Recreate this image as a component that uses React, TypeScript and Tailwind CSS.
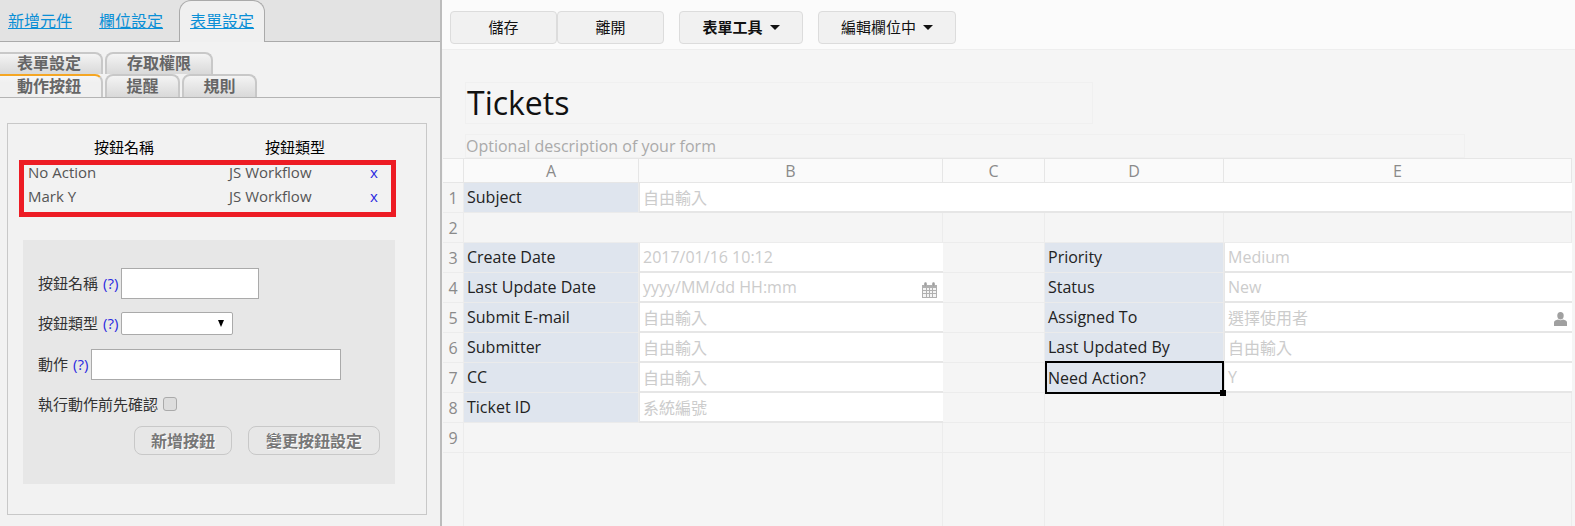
const cjk = "font-['Open_Sans','Noto_Sans_CJK_TC',sans-serif]";

function SubTab({ label, w, active, first }: { label: string; w: string; active?: boolean; first?: boolean }) {
  return (
    <div
      className={`${w} h-full flex items-center justify-center pb-[2px] rounded-t-lg border-2 border-b-0 border-[#c8c8c8] text-[16px] leading-none font-bold text-[#666] bg-gradient-to-b from-[#f4f4f4] to-[#d9d9d9] ${first ? "rounded-tl-none border-l-0 pr-[3px]" : ""} ${active ? "border-t-[#f5a623] from-[#f6f6f6] to-[#f0f0f0] to-30%" : ""}`}
    >
      {label}
    </div>
  );
}

function Help() {
  return <span className="text-[#2a2ae0] text-[15px] ml-[5px] mr-[3px]">(?)</span>;
}

function LeftPanel() {
  return (
    <div className="w-[442px] shrink-0 h-[526px] bg-[#f2f2f2] flex flex-col border-r-2 border-[#bcbcbc] text-[#333]">
      <div className="h-[42px] shrink-0 bg-[#e3e3e3] border-b border-[#aaa] flex items-end text-[16px] text-[#0a8fd6] underline">
        <span className="ml-[8px] mb-[12px] leading-[16px]">新增元件</span>
        <span className="ml-[27px] mb-[12px] leading-[16px]">欄位設定</span>
        <div className="ml-[16px] w-[86px] h-[42px] bg-[#f0f0f0] border border-b-0 border-[#aaa] rounded-t-xl pl-[10px] pt-[12px] leading-[16px] -mb-px">
          表單設定
        </div>
      </div>
      <div className="h-[56px] shrink-0 pt-[10px] flex flex-col border-b border-[#b4b4b4]">
        <div className="h-[22px] flex gap-[2px]">
          <SubTab label="表單設定" w="w-[103px]" first />
          <SubTab label="存取權限" w="w-[108px]" />
        </div>
        <div className="h-[23px] flex gap-[2px]">
          <SubTab label="動作按鈕" w="w-[103px]" first active />
          <SubTab label="提醒" w="w-[75px]" />
          <SubTab label="規則" w="w-[75px]" />
        </div>
      </div>
      <div className="ml-[7px] mt-[25px] w-[420px] h-[392px] border border-[#c8c8c8] pl-[11px] pt-[13px]">
        <div className="flex h-[20px] items-center text-[15px] text-black leading-none">
          <span className="ml-[75px]">按鈕名稱</span>
          <span className="ml-[111px]">按鈕類型</span>
        </div>
        <div className="mt-[3px] w-[377px] h-[57px] border-[5px] border-[#ed1c24] pb-[8px] text-[15px] text-[#555] flex flex-col justify-center">
          {["No Action", "Mark Y"].map((name) => (
            <div key={name} className="h-[24px] shrink-0 flex items-center">
              <span className="w-[205px] pl-[4px]">{name}</span>
              <span className="w-[141px]">JS Workflow</span>
              <span className="text-[#2a2ae0]">x</span>
            </div>
          ))}
        </div>
        <div className="ml-[4px] mt-[23px] w-[372px] h-[244px] bg-[#e7e7e7] pl-[15px] pt-[28px] text-[15px] leading-none">
          <div className="h-[31px] flex items-center">
            <span>按鈕名稱</span>
            <Help />
            <div className="w-[138px] h-[31px] bg-white border border-[#aaa]" />
          </div>
          <div className="mt-[13px] h-[23px] flex items-center">
            <span>按鈕類型</span>
            <Help />
            <div className="w-[112px] h-[23px] bg-white border border-[#aaa] rounded-[2px] flex items-center justify-end pr-[8px]">
              <div className="w-0 h-0 border-x-[3.5px] border-t-[7px] border-x-transparent border-t-black" />
            </div>
          </div>
          <div className="mt-[14px] h-[31px] flex items-center">
            <span>動作</span>
            <Help />
            <div className="w-[250px] h-[31px] bg-white border border-[#aaa]" />
          </div>
          <div className="mt-[16px] h-[16px] flex items-center">
            <span>執行動作前先確認</span>
            <div className="ml-[5px] w-[14px] h-[14px] rounded-[3px] border border-[#aaa] bg-[#ddd]" />
          </div>
          <div className="mt-[14px] flex gap-[16px] pl-[96px]">
            {[
              ["新增按鈕", "w-[98px]"],
              ["變更按鈕設定", "w-[132px]"],
            ].map(([t, w]) => (
              <div
                key={t}
                className={`${w} h-[29px] flex items-center justify-center rounded-lg border border-[#c8c8c8] text-[16px] font-bold text-[#777] [text-shadow:1px_1px_0_#fff]`}
              >
                {t}
              </div>
            ))}
          </div>
        </div>
      </div>
    </div>
  );
}

function ToolButton({ label, w, caret, bold }: { label: string; w: string; caret?: boolean; bold?: boolean }) {
  return (
    <div
      className={`${w} h-[33px] flex items-center justify-center gap-[7px] rounded-[4px] border border-[#dcdcdc] bg-[#f1f1f1] text-[15px] text-[#111] ${bold ? "font-bold" : ""}`}
    >
      {label}
      {caret && <div className="w-0 h-0 border-x-[5px] border-t-[5px] border-x-transparent border-t-[#111]" />}
    </div>
  );
}

function Calendar() {
  return (
    <svg width="15" height="16" viewBox="0 0 15 16" className="absolute right-[6px] top-[9px]" fill="none" stroke="#b0b0b0">
      <rect x="0.5" y="3.5" width="14" height="12" fill="#f4f4f4" />
      <path d="M0 4.5h15M0 5.5h15M0 8.5h15M0 11.5h15M4.5 6v9M7.5 6v9M10.5 6v9" />
      <rect x="2.5" y="0.5" width="2" height="4" rx="1" fill="#a0a0a0" />
      <rect x="10.5" y="0.5" width="2" height="4" rx="1" fill="#a0a0a0" />
    </svg>
  );
}

function User() {
  return (
    <svg width="13" height="14" viewBox="0 0 13 14" className="absolute right-[5px] top-[9px]" fill="#a0a0a0">
      <ellipse cx="6.5" cy="3.7" rx="3.2" ry="3.7" />
      <path d="M0 14V10.5C0 9 2 8 4 7.6C5.5 8.6 7.5 8.6 9 7.6C11 8 13 9 13 10.5V14Z" />
    </svg>
  );
}

const labelCell = "bg-[#dfe5ee] text-[#222] border-b border-r border-[#ebebeb] pl-[3px] pb-[2px] flex items-center text-[16px]";
const valueCell = "relative bg-white text-[#ccc] border-b-2 border-l border-[#e6e6e6] pl-[3px] flex items-center text-[16px]";
const emptyCell = "border-b border-r border-[#ececec]";

// CJK placeholders sit a little lower than the latin ones in the reference
const nudge = (s: string) => (/[^\x00-\x7f]/.test(s) ? "pt-[2px]" : "");

type Row = { a?: string; b?: string; d?: string; e?: string; icon?: "cal" | "user"; selected?: boolean };

const rows: Row[] = [
  { a: "Create Date", b: "2017/01/16 10:12", d: "Priority", e: "Medium" },
  { a: "Last Update Date", b: "yyyy/MM/dd HH:mm", d: "Status", e: "New", icon: "cal" },
  { a: "Submit E-mail", b: "自由輸入", d: "Assigned To", e: "選擇使用者", icon: "user" },
  { a: "Submitter", b: "自由輸入", d: "Last Updated By", e: "自由輸入" },
  { a: "CC", b: "自由輸入", d: "Need Action?", e: "Y", selected: true },
  { a: "Ticket ID", b: "系統編號" },
];

function RowNum({ n }: { n: number }) {
  return <div className="border-b border-r border-[#ececec] flex items-center justify-center text-[16px] text-[#8a8a8a]">{n}</div>;
}

function Sheet() {
  return (
    <div className="flex-1 min-h-0 ml-px grid grid-cols-[21px_175px_304px_102px_179px_348px] grid-rows-[25px_repeat(9,30px)_1fr]">
      {["", "A", "B", "C", "D", "E"].map((c, i) => (
        <div key={i} className="bg-[#fafafa] border-t border-b border-r border-[#e6e6e6] flex items-center justify-center text-[16px] text-[#8a8a8a]">
          {c}
        </div>
      ))}

      <RowNum n={1} />
      <div className={labelCell}>Subject</div>
      <div className={`${valueCell} col-span-4 ${nudge("自由輸入")}`}>自由輸入</div>

      <RowNum n={2} />
      <div className={`${emptyCell} col-span-2`} />
      <div className={emptyCell} />
      <div className={emptyCell} />
      <div className={emptyCell} />

      {rows.map((r, i) => (
        <div key={i} className="contents">
          <RowNum n={i + 3} />
          <div className={labelCell}>{r.a}</div>
          <div className={`${valueCell} ${nudge(r.b ?? "")}`}>
            {r.b}
            {r.icon === "cal" && <Calendar />}
          </div>
          <div className={emptyCell} />
          {r.d ? (
            <div className={r.selected ? "relative z-10 -mt-[2px] -mb-px bg-[#dfe5ee] text-[#222] border-2 border-black pl-[1px] flex items-center text-[16px]" : labelCell}>
              {r.d}
              {r.selected && <div className="absolute -right-[4px] -bottom-[4px] w-[6px] h-[6px] bg-black" />}
            </div>
          ) : (
            <div className={emptyCell} />
          )}
          {r.e ? (
            <div className={`${valueCell} ${nudge(r.e)}`}>
              {r.e}
              {r.icon === "user" && <User />}
            </div>
          ) : (
            <div className={emptyCell} />
          )}
        </div>
      ))}

      <RowNum n={9} />
      <div className={`${emptyCell} col-span-2`} />
      <div className={emptyCell} />
      <div className={emptyCell} />
      <div className={emptyCell} />

      <div className="border-r border-[#ececec]" />
      <div className="col-span-2 border-r border-[#ececec]" />
      <div className="border-r border-[#ececec]" />
      <div className="border-r border-[#ececec]" />
      <div className="border-r border-[#ececec]" />
    </div>
  );
}

function RightPanel() {
  return (
    <div className="flex-1 min-w-0 h-[526px] flex flex-col bg-[#f5f5f5]">
      <div className="h-[50px] shrink-0 bg-[#fbfbfb] border-b border-[#eee] flex items-start pt-[11px] pl-[8px]">
        <ToolButton label="儲存" w="w-[107px]" />
        <ToolButton label="離開" w="w-[107px]" />
        <div className="ml-[15px]">
          <ToolButton label="表單工具" w="w-[124px]" caret bold />
        </div>
        <div className="ml-[15px]">
          <ToolButton label="編輯欄位中" w="w-[138px]" caret />
        </div>
      </div>
      <div className="h-[108px] shrink-0 pl-[23px] pt-[32px]">
        <div className="w-[628px] h-[42px] border border-[#f0f0f0] text-[32px] leading-[40px] text-[#111] pl-px">Tickets</div>
        <div className="mt-[10px] w-[1000px] h-[24px] border border-[#f0f0f0] text-[16px] leading-[22px] text-[#aaa]">
          Optional description of your form
        </div>
      </div>
      <Sheet />
    </div>
  );
}

export default function App() {
  return (
    <div className={`flex w-[1575px] h-[526px] overflow-hidden ${cjk}`}>
      <LeftPanel />
      <RightPanel />
    </div>
  );
}
